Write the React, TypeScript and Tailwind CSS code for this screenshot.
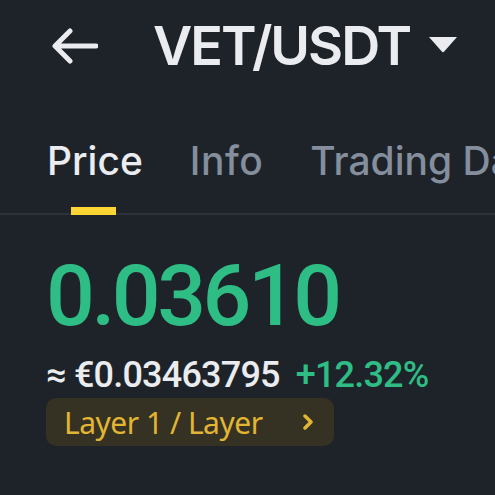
import React from 'react'

function BackArrow() {
  return (
    <svg width="46" height="36" viewBox="0 0 46 36" fill="none">
      <path d="M44 18H4M18 3L3 18l15 15" stroke="#eaecef" strokeWidth="5" strokeLinecap="round" strokeLinejoin="round" />
    </svg>
  )
}

function Caret() {
  return (
    <svg width="30" height="18" viewBox="0 0 30 18">
      <path d="M1 1h28L16.2 15.6a1.6 1.6 0 0 1-2.4 0z" fill="#eaecef" />
    </svg>
  )
}

export default function App() {
  return (
    <div className="w-[495px] h-[495px] overflow-hidden bg-[#1e2329] font-['Inter',sans-serif]">
      {/* header */}
      <div className="flex items-center h-[92px] pl-[52px]">
        <BackArrow />
        <h1 className="ml-[55px] text-[54px] font-semibold text-[#eaecef] tracking-[-2px] leading-none">VET/USDT</h1>
        <span className="ml-[18px] mt-[-2px]"><Caret /></span>
      </div>

      {/* tabs */}
      <div className="flex gap-[47px] pl-[47px] pt-[49px] whitespace-nowrap text-[39px] font-medium leading-none">
        <span className="text-[#eaecef]">Price</span>
        <span className="text-[#848e9c] tracking-[0.5px]">Info</span>
        <span className="text-[#848e9c]">Trading Data</span>
      </div>
      <div className="relative mt-[33px] h-[2px] bg-[#2b3139]">
        <div className="absolute left-[71px] bottom-0 w-[45px] h-[8px] bg-[#fcd535]" />
      </div>

      {/* price */}
      <div className="pl-[46px] pt-[38px] font-['Roboto',sans-serif]">
        <div className="text-[86px] font-medium leading-none text-[#2ebd85] tracking-[-3.5px]">0.03610</div>
        <div className="mt-[18px] flex items-baseline gap-[16px] text-[36px] font-medium leading-none tracking-[-0.8px]">
          <span className="text-[#eaecef]">≈ €0.03463795</span>
          <span className="text-[#2ebd85]">+12.32%</span>
        </div>
        <div className="mt-[5px] flex items-center justify-between w-[288px] h-[48px] rounded-[10px] bg-[#353224] pl-[18px] pr-[20px]">
          <span className="text-[30px] text-[#e2b533] font-['Noto_Sans',sans-serif] tracking-[-0.5px]">Layer 1 / Layer</span>
          <svg width="12" height="16" viewBox="0 0 12 16">
            <path d="M3 2l6 6-6 6" stroke="#e2b533" strokeWidth="3.5" fill="none" strokeLinecap="round" strokeLinejoin="round" />
          </svg>
        </div>
      </div>
    </div>
  )
}
